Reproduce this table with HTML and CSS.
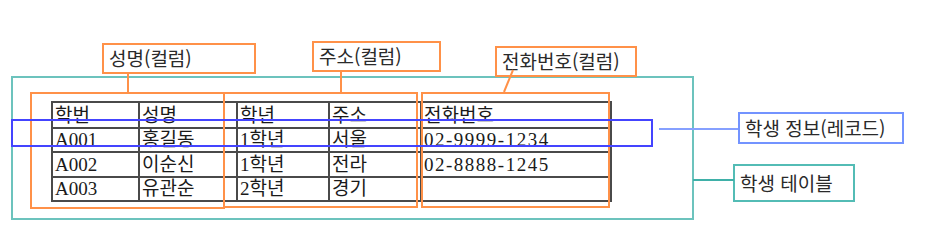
FILE: index.html
```html
<!DOCTYPE html>
<html lang="ko">
<head>
<meta charset="utf-8">
<title>학생 테이블</title>
<link rel="stylesheet" href="styles.css">
</head>
<body>
<div class="canvas">
  <div class="frame table-frame"></div>

  <table class="grid">
    <colgroup>
      <col class="c1"><col class="c2"><col class="c3"><col class="c4"><col class="c5">
    </colgroup>
    <tr class="r1"><td>학번</td><td>성명</td><td>학년</td><td>주소</td><td>전화번호</td></tr>
    <tr class="r2"><td>A001</td><td>홍길동</td><td>1학년</td><td>서울</td><td class="tel">02-9999-1234</td></tr>
    <tr class="r3"><td>A002</td><td>이순신</td><td>1학년</td><td>전라</td><td class="tel">02-8888-1245</td></tr>
    <tr class="r4"><td>A003</td><td>유관순</td><td>2학년</td><td>경기</td><td></td></tr>
  </table>

  <div class="frame col-a"></div>
  <div class="frame col-b"></div>
  <div class="frame col-c"></div>
  <div class="frame record"></div>

  <div class="label lbl-name">성명(컬럼)</div>
  <div class="label lbl-addr">주소(컬럼)</div>
  <div class="label lbl-tel">전화번호(컬럼)</div>
  <div class="label lbl-record">학생 정보(레코드)</div>
  <div class="label lbl-table">학생 테이블</div>

  <svg class="links" width="940" height="247" viewBox="0 0 940 247">
    <line x1="128" y1="73" x2="128" y2="93" class="ln-orange"/>
    <line x1="341" y1="71" x2="341" y2="93" class="ln-orange"/>
    <line x1="513" y1="70" x2="504" y2="92" class="ln-orange"/>
    <line x1="659" y1="129" x2="738" y2="129" class="ln-blue"/>
    <line x1="693" y1="180" x2="734" y2="180" class="ln-teal"/>
  </svg>
</div>
</body>
</html>
```

FILE: styles.css
```css
html, body {
  margin: 0;
  padding: 0;
  background: #ffffff;
}

.canvas {
  position: relative;
  width: 940px;
  height: 247px;
  overflow: hidden;
  font-family: "Noto Sans CJK KR", "Noto Sans", sans-serif;
  color: #1a1a1a;
}

.frame {
  position: absolute;
  box-sizing: border-box;
  border: 2px solid;
}

.table-frame {
  left: 11px; top: 76px; width: 683px; height: 144px;
  border-color: #6cc3bd;
}

.col-a {
  left: 30px; top: 92px; width: 195px; height: 117px;
  border-color: #ff9148;
}
.col-b {
  left: 223px; top: 92px; width: 195px; height: 116px;
  border-color: #ff9148;
}
.col-c {
  left: 421px; top: 92px; width: 189px; height: 116px;
  border-color: #ff9148;
}

.record {
  left: 11px; top: 119px; width: 642px; height: 28px;
  border-color: #4444ff;
}

.grid {
  position: absolute;
  left: 51px;
  top: 101px;
  border-collapse: collapse;
  table-layout: fixed;
  width: 559px;
  font-family: "Liberation Serif", "Noto Sans CJK KR", serif;
  font-size: 19px;
  color: #1a1a1a;
}
.grid td {
  border: 2px solid #4a4a4a;
  padding: 0 0 0 2px;
  line-height: 22px;
  vertical-align: bottom;
  white-space: nowrap;
  overflow: hidden;
}
.grid .tel { letter-spacing: 1.5px; }
.grid .c1 { width: 87px; }
.grid .c2 { width: 98px; }
.grid .c3 { width: 92px; }
.grid .c4 { width: 92px; }
.grid .c5 { width: 190px; }
.grid .r1 td { height: 24px; }
.grid .r2 td { height: 22px; }
.grid .r3 td { height: 23px; }
.grid .r4 td { height: 22px; }

.label {
  position: absolute;
  box-sizing: border-box;
  border: 2px solid;
  background: #ffffff;
  font-size: 19px;
  line-height: 24px;
  padding: 1px 0 0 5px;
  white-space: nowrap;
  color: #2a2a2a;
}
.lbl-name {
  left: 102px; top: 43px; width: 154px; height: 31px;
  border-color: #ff9148;
}
.lbl-addr {
  left: 312px; top: 41px; width: 129px; height: 31px;
  border-color: #ff9148;
}
.lbl-tel {
  left: 495px; top: 46px; width: 142px; height: 31px;
  border-color: #ff9148;
}
.lbl-record {
  left: 738px; top: 112px; width: 166px; height: 32px;
  border-color: #7393ff;
  padding-top: 2px;
}
.lbl-table {
  left: 733px; top: 164px; width: 122px; height: 38px;
  border-color: #53bcb5;
  padding-top: 5px;
}

.links {
  position: absolute;
  left: 0;
  top: 0;
  pointer-events: none;
}
.links line { stroke-width: 2; }
.ln-orange { stroke: #ff9148; }
.ln-blue { stroke: #86a0ff; }
.ln-teal { stroke: #3fb0a8; }
```
